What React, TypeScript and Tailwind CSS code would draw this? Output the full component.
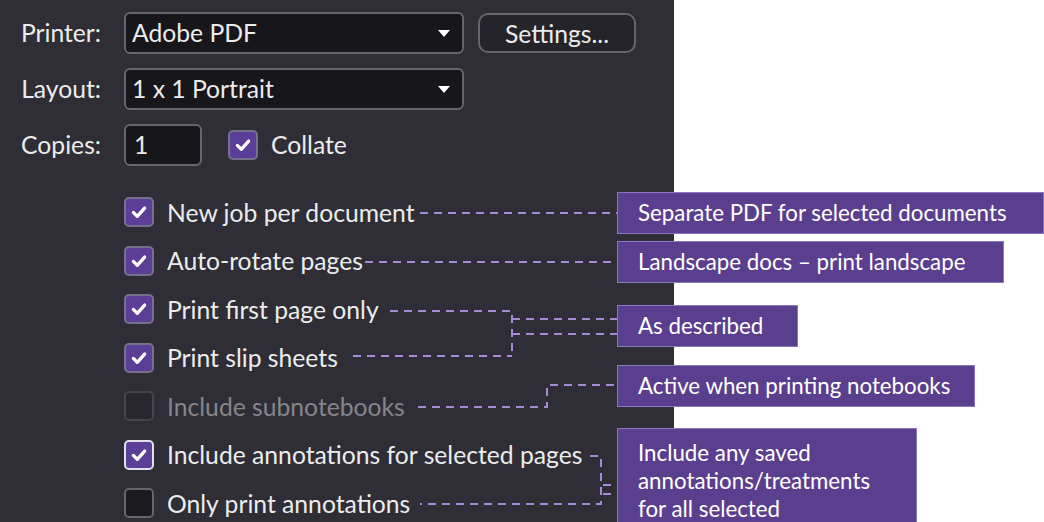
import React from "react";

const Check = () => (
  <svg viewBox="0 0 30 30" className="w-full h-full">
    <path d="M8.5 15.5 L13 20 L21.5 10.5" fill="none" stroke="white" strokeWidth="3.8" strokeLinecap="round" strokeLinejoin="round" />
  </svg>
);

const Box = ({ state }: { state: "on" | "focus" | "off" | "disabled" }) => {
  const cls =
    state === "on"
      ? "bg-[#5b3e98] border-[#77708a]"
      : state === "focus"
      ? "bg-[#5b3e98] border-[#e2e0ea]"
      : state === "off"
      ? "bg-[#1b1a1f] border-[#66646d]"
      : "bg-[#28272d] border-[#45444b]";
  return (
    <div className={`w-[30px] h-[30px] shrink-0 rounded-[5px] border-2 ${cls}`}>
      {(state === "on" || state === "focus") && <Check />}
    </div>
  );
};

const Caret = () => (
  <svg width="12" height="7" viewBox="0 0 12 7" className="mr-[12px]">
    <path d="M0 0 H12 L6 7 Z" fill="white" />
  </svg>
);

const Select = ({ value }: { value: string }) => (
  <div className="w-[340px] h-[42px] rounded-[6px] border-2 border-[#66646d] bg-[#17161b] flex items-center justify-between pl-[6px]">
    <span>{value}</span>
    <Caret />
  </div>
);

const options: { label: string; state: "on" | "focus" | "off" | "disabled" }[] = [
  { label: "New job per document", state: "on" },
  { label: "Auto-rotate pages", state: "on" },
  { label: "Print first page only", state: "on" },
  { label: "Print slip sheets", state: "on" },
  { label: "Include subnotebooks", state: "disabled" },
  { label: "Include annotations for selected pages", state: "focus" },
  { label: "Only print annotations", state: "off" },
];

const notes = [
  { text: "Separate PDF for selected documents", cls: "top-[192px] w-[427px] h-[42px]" },
  { text: "Landscape docs – print landscape", cls: "top-[241px] w-[387px] h-[42px]" },
  { text: "As described", cls: "top-[305px] w-[181px] h-[42px]" },
  { text: "Active when printing notebooks", cls: "top-[365px] w-[358px] h-[42px]" },
];

export default function App() {
  return (
    <div className="relative w-[1044px] h-[522px] overflow-hidden bg-white flex font-['Lato',sans-serif]">
      <div className="w-[674px] h-full bg-[#2f2e37] text-[#ececec] text-[24.7px] pt-[12px]">
        <div className="flex flex-col gap-[14px]">
          <div className="flex items-center">
            <div className="w-[101px] text-right mr-[23px]">Printer:</div>
            <Select value="Adobe PDF" />
            <button className="ml-[14px] w-[158px] h-[40px] rounded-[10px] border-2 border-[#66646d] bg-[#25242b] text-[#ececec]">
              Settings...
            </button>
          </div>
          <div className="flex items-center">
            <div className="w-[101px] text-right mr-[23px]">Layout:</div>
            <Select value="1 x 1 Portrait" />
          </div>
          <div className="flex items-center">
            <div className="w-[101px] text-right mr-[23px]">Copies:</div>
            <div className="w-[78px] h-[42px] rounded-[6px] border-2 border-[#66646d] bg-[#17161b] flex items-center pl-[8px]">1</div>
            <div className="ml-[26px] flex items-center gap-[13px]">
              <Box state="on" />
              <span>Collate</span>
            </div>
          </div>
        </div>
        <div className="mt-[22px] pl-[124px] flex flex-col">
          {options.map((o) => (
            <div key={o.label} className="h-[48.5px] flex items-center gap-[13px]">
              <Box state={o.state} />
              <span className={o.state === "disabled" ? "text-[#86858c]" : ""}>{o.label}</span>
            </div>
          ))}
        </div>
      </div>

      <svg className="absolute inset-0 pointer-events-none" width="1044" height="522">
        <g fill="none" stroke="#a68bdb" strokeWidth="2" strokeDasharray="8 6">
          <path d="M420 213 H617" />
          <path d="M365 262 H617" />
          <path d="M390 311 H512 V356" />
          <path d="M353 356 H512" />
          <path d="M512 319 H617" />
          <path d="M512 334 H617" />
          <path d="M418 407 H547 V385 H617" />
          <path d="M590 456 H601 V504 H420" />
          <path d="M603 485 H617" />
          <path d="M603 494 H617" />
        </g>
      </svg>

      {notes.map((n) => (
        <div
          key={n.text}
          className={`absolute left-[617px] ${n.cls} bg-[#5b3f8f] border border-[#8a76c2] text-white text-[22.3px] flex items-center pl-[20px]`}
        >
          {n.text}
        </div>
      ))}
      <div className="absolute left-[617px] top-[428px] w-[300px] h-[110px] bg-[#5b3f8f] border border-[#8a76c2] text-white text-[22.3px] leading-[28px] pl-[20px] pt-[10px]">
        Include any saved
        <br />
        annotations/treatments
        <br />
        for all selected
      </div>
    </div>
  );
}
